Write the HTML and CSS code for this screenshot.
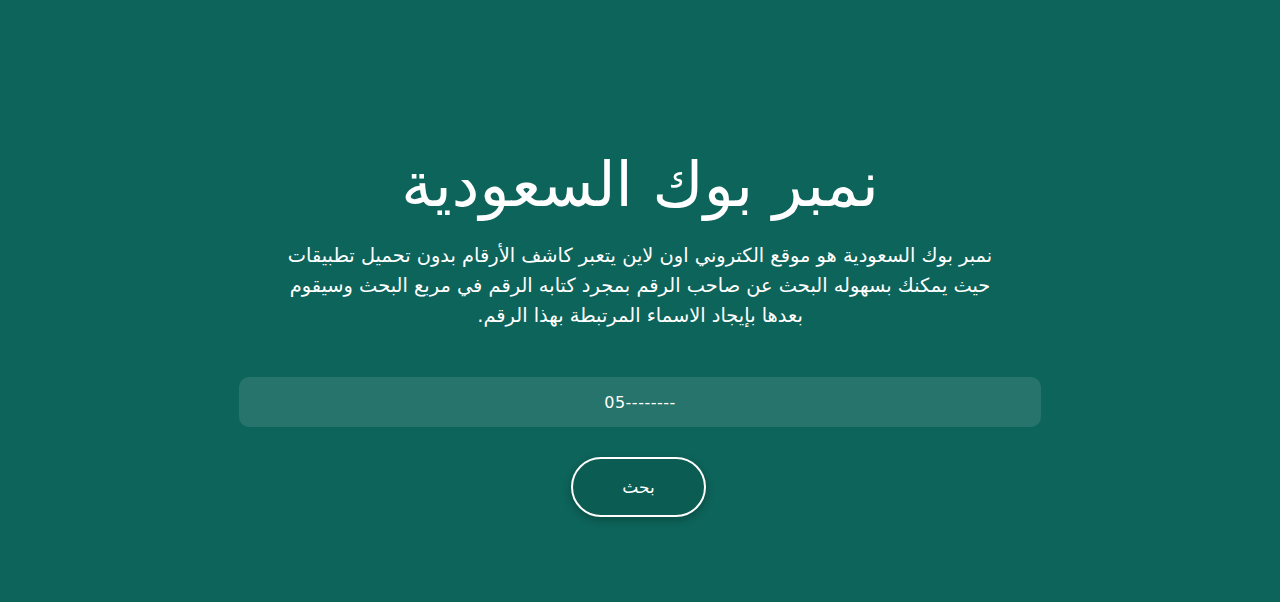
FILE: index.html
```html
<!DOCTYPE html>
<html lang="ar" dir="rtl">
<head>
<meta charset="utf-8">
<link rel="stylesheet" href="styles.css">
</head>
<body>
<main class="hero">
  <h1 class="title">نمبر بوك السعودية</h1>
  <p class="lead">نمبر بوك السعودية هو موقع الكتروني اون لاين يتعبر كاشف الأرقام بدون تحميل تطبيقات<br>حيث يمكنك بسهوله البحث عن صاحب الرقم بمجرد كتابه الرقم في مربع البحث وسيقوم<br>بعدها بإيجاد الاسماء المرتبطة بهذا الرقم.</p>
  <form class="search">
    <input class="field" type="text" placeholder="05--------" dir="ltr">
    <button class="btn" type="button">بحث</button>
  </form>
</main>
</body>
</html>
```
FILE: styles.css
```css
html, body {
  margin: 0;
  padding: 0;
  height: 100%;
}
body {
  background: #0d645a;
  color: #fff;
  font-family: "DejaVu Sans", sans-serif;
}
.hero {
  display: flex;
  flex-direction: column;
  align-items: center;
  padding-top: 143px;
}
.title {
  margin: 0;
  font-size: 62px;
  font-weight: 400;
  line-height: 84px;
}
.lead {
  margin: 14px 0 0;
  width: 802px;
  text-align: center;
  font-size: 19.4px;
  line-height: 30px;
}
.search {
  margin-top: 46px;
  display: flex;
  flex-direction: column;
  align-items: center;
  gap: 30px;
}
.field {
  width: 802px;
  height: 50px;
  box-sizing: border-box;
  border: none;
  border-radius: 10px;
  background: #26746b;
  color: #fff;
  text-align: center;
  font-family: "DejaVu Sans", sans-serif;
  font-size: 16px;
  letter-spacing: 0.5px;
  outline: none;
}
.field::placeholder {
  color: #fff;
  opacity: 1;
}
.btn {
  width: 135px;
  height: 60px;
  margin-right: 3px;
  border: 2px solid #fff;
  border-radius: 30px;
  background: #0b5c52;
  color: #fff;
  font-family: inherit;
  font-size: 17px;
  box-shadow: 0 3px 8px rgba(0,0,0,0.25);
  cursor: pointer;
}
```
